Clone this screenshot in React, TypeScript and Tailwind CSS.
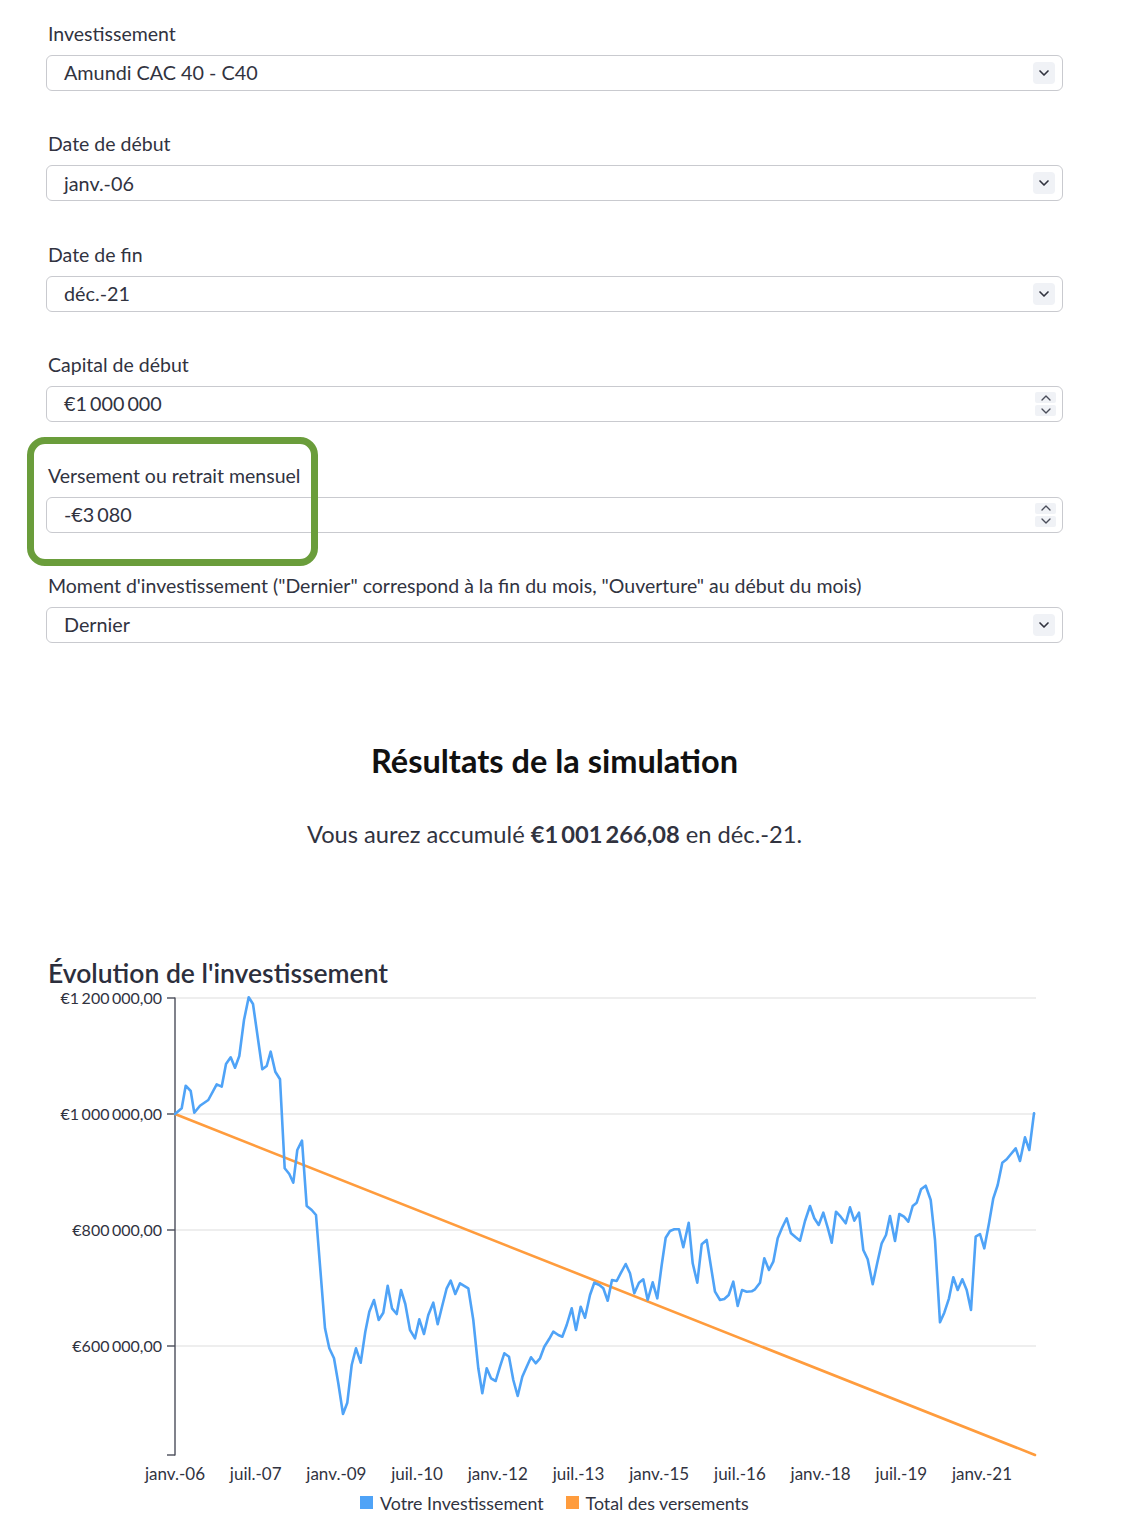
import { ChevronDown, ChevronUp } from "lucide-react";

const BLUE = "#4fa3f7";
const ORANGE = "#ff9c3d";

// traced from the monthly series, page coordinates
const bluePoints =
  "175,1114 181.7,1108.3 185.7,1085.7 190.7,1091 194.3,1112.7 200,1105.7 208.3,1100 216.7,1084.3 221.7,1086.7 226,1064 230.7,1057.3 235,1067.7 239.3,1056 244,1020 248.7,997.3 253,1004 262.3,1069.3 266.7,1066 270.7,1051.7 275.3,1071.7 280,1079.3 284.7,1168.3 289.3,1174 293.3,1182.7 297.3,1150 302,1140.7 306.7,1206 311.7,1210 316,1215 325,1328.3 329.3,1348.3 334,1358.3 338.3,1383.3 343,1414 347.3,1402.7 351.7,1365 356,1348.3 360.7,1362.7 365.3,1331.7 369.3,1311.7 374,1300 378.7,1320 383.3,1312.7 387.7,1285.7 392,1308.3 396.7,1314 401,1290 405.3,1304 410,1330 415,1338.3 419.3,1319.3 424,1334 428.3,1315 433.3,1302.7 437.7,1324.3 442,1306.7 446.7,1288.3 450.7,1280.7 455.3,1294 460,1283.3 468.3,1288.3 " +
  "473.3,1320 478.3,1368.3 482.3,1393.3 486.7,1368.3 491,1378.3 495.7,1381 500,1366.7 504.3,1353.3 509,1356.7 513.3,1380 517.7,1396 522.3,1376.7 526.7,1366.7 531,1357.3 535.7,1363.3 540,1358.3 544.3,1346.7 549,1339.3 553.3,1331.7 558.3,1335 562.3,1336.7 566.7,1325 571.7,1308.3 576,1330 580.7,1306.7 585,1317.7 590,1295 594.3,1282.7 599.3,1285 603.3,1288.3 607.7,1300.7 612,1280 616.7,1281 621,1272.7 625.7,1264 630,1273.3 634.3,1293.3 639,1282.7 643.3,1279.3 647.7,1300 652.7,1282.3 657.3,1298.3 661.7,1265 665.7,1237.7 670,1231 674.3,1229.3 679,1229.3 683.3,1247.3 688.7,1222.7 692.7,1263.3 697.3,1282.7 701.7,1244.3 706.7,1240 710.7,1265 715,1291.7 720,1300 724.3,1299 728.7,1295 733.3,1281.7 737.7,1306 742,1290 746.7,1291.7 751.7,1291.3 " +
  "755,1289.3 760,1282.7 764.3,1258.3 769,1270 773.3,1261.7 777.7,1238.3 782.3,1227.3 786.7,1218.3 791,1233.3 795.7,1237.3 800,1240.7 805,1221 810,1206 814.3,1218.3 818.7,1225 823.3,1212.7 827.7,1227.7 831.7,1242.7 836,1211.7 840.7,1216.7 845.7,1223.3 850,1207.3 854.3,1220.7 859,1212.7 863.3,1250 867.7,1259.3 872.7,1284.3 877.3,1262.7 881.7,1243.3 886,1235 890,1216 895,1241 899.3,1214 904,1216.7 908.3,1221.7 912.7,1206 916.7,1202.7 921,1189.3 925.7,1185.7 930.7,1200 935,1240 940,1322.3 944.3,1312.7 949,1298.3 953.3,1277.3 957.7,1290 962.3,1279.3 966.7,1290 971,1310 975.7,1236.7 980,1234 984.3,1248.3 989,1223.3 993.3,1198.3 997.7,1185 1002.3,1162.7 1006.7,1159.3 1011,1154 1015.7,1148.3 1020,1161 1025,1137.3 1029.3,1150 1034,1113.3";

const yTicks = [
  { y: 998, parts: ["€1", "200", "000,00"] },
  { y: 1114, parts: ["€1", "000", "000,00"] },
  { y: 1230, parts: ["€800", "000,00"] },
  { y: 1346, parts: ["€600", "000,00"] },
];

const xLabels = [
  "janv.-06",
  "juil.-07",
  "janv.-09",
  "juil.-10",
  "janv.-12",
  "juil.-13",
  "janv.-15",
  "juil.-16",
  "janv.-18",
  "juil.-19",
  "janv.-21",
];

// fr-FR amounts use a narrow space between digit groups
function Amount({ parts }: { parts: string[] }) {
  return (
    <span>
      {parts.map((p, i) => (
        <span key={i} className={i > 0 ? "ml-[3px] inline-block" : "inline-block"}>
          {p}
        </span>
      ))}
    </span>
  );
}

function FieldLabel({ children }: { children: React.ReactNode }) {
  return <div className="mb-[9px] pl-[2px] text-[19.5px] leading-[24px]">{children}</div>;
}

function SelectField({ label, value }: { label: string; value: string }) {
  return (
    <div>
      <FieldLabel>{label}</FieldLabel>
      <div className="flex h-[36px] items-center justify-between rounded-[6px] border border-[#c9cacf] pl-[17px] pr-[7px]">
        <span className="text-[19.8px]">{value}</span>
        <span className="flex h-[22px] w-[22px] items-center justify-center rounded-[4px] bg-[#f0f2f6]">
          <ChevronDown size={16} strokeWidth={2.5} color="#31333f" />
        </span>
      </div>
    </div>
  );
}

function NumberField({ label, value }: { label: string; value: React.ReactNode }) {
  return (
    <div>
      <FieldLabel>{label}</FieldLabel>
      <div className="flex h-[36px] items-center justify-between rounded-[6px] border border-[#c9cacf] pl-[17px] pr-[6px]">
        <span className="text-[19.8px]">{value}</span>
        <span className="flex flex-col gap-[2px]">
          <span className="flex h-[11px] w-[21px] items-center justify-center overflow-hidden rounded-[2px] bg-[#f0f2f6]">
            <ChevronUp size={16} strokeWidth={2} color="#4a4d5a" />
          </span>
          <span className="flex h-[11px] w-[21px] items-center justify-center overflow-hidden rounded-[2px] bg-[#f0f2f6]">
            <ChevronDown size={16} strokeWidth={2} color="#4a4d5a" />
          </span>
        </span>
      </div>
    </div>
  );
}

function Chart() {
  return (
    <svg width={1136} height={500} viewBox="0 988 1136 500" className="block">
      {/* grid */}
      {yTicks.map((t) => (
        <line key={t.y} x1={175} x2={1036} y1={t.y} y2={t.y} stroke="#dedede" strokeWidth={1.2} />
      ))}

      {/* y axis */}
      <line x1={175} x2={175} y1={997.5} y2={1455.5} stroke="#4a4d5a" strokeWidth={1.4} />
      {[...yTicks.map((t) => t.y), 1455].map((y) => (
        <line key={y} x1={167} x2={175} y1={y} y2={y} stroke="#4a4d5a" strokeWidth={1.4} />
      ))}
      {yTicks.map((t) => (
        <text
          key={t.y}
          x={162}
          y={t.y + 5.5}
          textAnchor="end"
          fontSize={16}
          fill="#31333f"
          fontFamily="Lato, sans-serif"
        >
          {t.parts.map((p, i) => (
            <tspan key={i} dx={i > 0 ? 2.5 : 0}>
              {p}
            </tspan>
          ))}
        </text>
      ))}

      {/* x labels */}
      {xLabels.map((l, i) => (
        <text
          key={l}
          x={175 + i * 80.7}
          y={1480}
          textAnchor="middle"
          fontSize={17}
          fill="#31333f"
          fontFamily="Lato, sans-serif"
        >
          {l}
        </text>
      ))}

      {/* series */}
      <line x1={175} y1={1114} x2={1035} y2={1455} stroke={ORANGE} strokeWidth={2.6} strokeLinecap="round" />
      <polyline
        points={bluePoints}
        fill="none"
        stroke={BLUE}
        strokeWidth={2.6}
        strokeLinejoin="round"
        strokeLinecap="round"
      />
    </svg>
  );
}

export default function App() {
  return (
    <div className="relative w-[1136px] bg-white pb-[22px] font-['Lato',sans-serif] text-[#31333f]">
      {/* Form */}
      <div className="flex w-[1063px] flex-col gap-[41.4px] pl-[46px] pt-[22px]">
        <SelectField label="Investissement" value="Amundi CAC 40 - C40" />
        <SelectField label="Date de début" value="janv.-06" />
        <SelectField label="Date de fin" value="déc.-21" />
        <NumberField label="Capital de début" value={<Amount parts={["€1", "000", "000"]} />} />
        <NumberField label="Versement ou retrait mensuel" value={<Amount parts={["-€3", "080"]} />} />
        <SelectField
          label={`Moment d'investissement ("Dernier" correspond à la fin du mois, "Ouverture" au début du mois)`}
          value="Dernier"
        />
      </div>

      {/* Highlight */}
      <div className="absolute left-[27px] top-[437px] h-[129px] w-[291px] rounded-[18px] border-[7px] border-[#6a9d3b]" />

      {/* Results */}
      <div className="ml-[46px] w-[1017px] text-center">
        <h2 className="mt-[98px] text-[32.5px] font-bold leading-[40px] text-[#111]">
          Résultats de la simulation
        </h2>
        <p className="mt-[38px] text-[23.7px] leading-[30px]">
          Vous aurez accumulé{" "}
          <span className="font-bold">
            <Amount parts={["€1", "001", "266,08"]} />
          </span>{" "}
          en déc.-21.
        </p>
      </div>

      {/* Chart */}
      <div className="mt-[109px]">
        <h3 className="pl-[48px] text-[26.5px] font-semibold leading-[30px] text-[#2c2f3d]">
          Évolution de l'investissement
        </h3>
        <Chart />
        <div className="mt-[5px] flex items-center pl-[360px] text-[17.8px] leading-[20px]">
          <span className="h-[13px] w-[13px] bg-[#4fa3f7]" />
          <span className="ml-[7px]">Votre Investissement</span>
          <span className="ml-[22px] h-[13px] w-[13px] bg-[#ff9c3d]" />
          <span className="ml-[7px]">Total des versements</span>
        </div>
      </div>
    </div>
  );
}
